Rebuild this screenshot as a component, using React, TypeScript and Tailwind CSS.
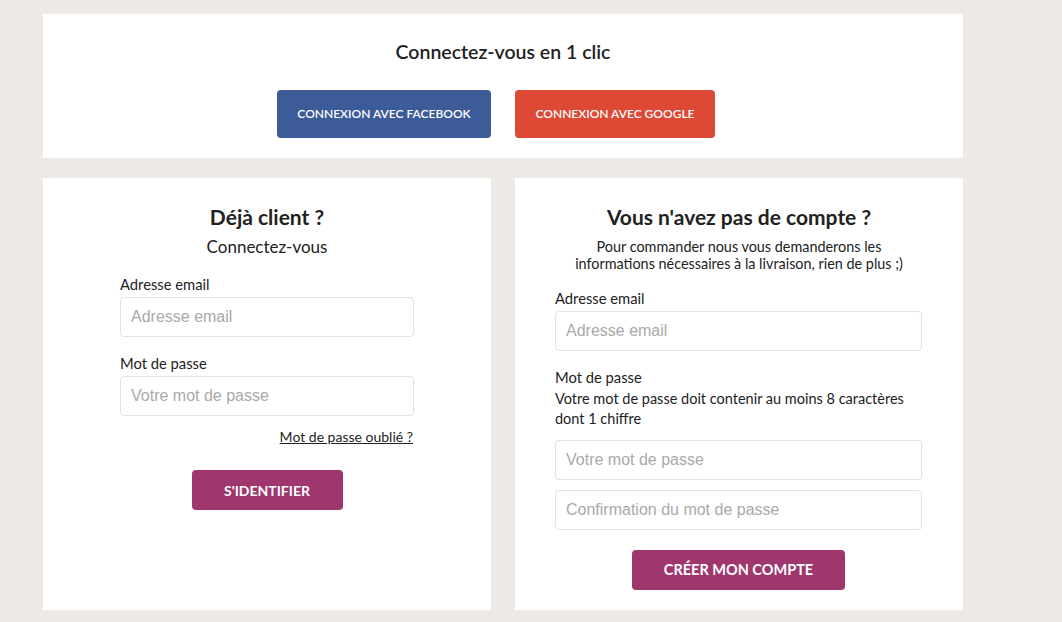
import React from 'react';

const font = { fontFamily: 'Lato, "Noto Sans", sans-serif' };

const Field = ({ placeholder, type = 'text' }: { placeholder: string; type?: string }) => (
  <input
    type={type}
    placeholder={placeholder}
    className="block w-full h-10 px-[10px] rounded border border-[#e7e1da] bg-white text-[16px] text-[#333] placeholder:text-[#a9a9a9] outline-none font-['Liberation_Sans',Arial,sans-serif]"
  />
);

const App: React.FC = () => {
  return (
    <div className="min-h-screen bg-[#edeae6] text-[#222] pt-[14px] pl-[43px]" style={font}>
      <div className="w-[920px]">
        {/* Social login */}
        <div className="bg-white pt-[26px] pb-[20px] flex flex-col items-center">
          <h2 className="text-[19.5px] leading-6 font-semibold">Connectez-vous en 1 clic</h2>
          <div className="mt-[26px] pr-[14px] flex gap-6">
            <button className="w-[214px] h-12 rounded bg-[#3d5a99] text-white text-[12px] font-semibold uppercase">
              Connexion avec Facebook
            </button>
            <button className="w-[200px] h-12 rounded bg-[#dd4935] text-white text-[12px] font-semibold uppercase">
              Connexion avec Google
            </button>
          </div>
        </div>

        <div className="mt-5 grid grid-cols-2 gap-6">
          {/* Existing customer */}
          <div className="bg-white h-[432px] pt-[25px] flex flex-col items-center">
            <h2 className="text-[21px] leading-7 font-bold">Déjà client ?</h2>
            <p className="mt-1 text-[17px] leading-6">Connectez-vous</p>
            <div className="w-[294px] mt-[15px] flex flex-col">
              <label className="text-[14.75px] leading-5">Adresse email</label>
              <div className="mt-[3px]">
                <Field placeholder="Adresse email" type="email" />
              </div>
              <label className="mt-4 text-[14.75px] leading-5">Mot de passe</label>
              <div className="mt-[3px]">
                <Field placeholder="Votre mot de passe" type="password" />
              </div>
              <a href="#" className="mt-3 mr-px self-end text-[14px] leading-[18px] underline">
                Mot de passe oublié ?
              </a>
              <button className="mt-6 self-center w-[151px] h-10 rounded bg-[#9f366e] text-white text-[14px] font-bold uppercase">
                S'identifier
              </button>
            </div>
          </div>

          {/* New customer */}
          <div className="bg-white h-[432px] pt-[25px] flex flex-col items-center">
            <h2 className="text-[21px] leading-7 font-bold">Vous n'avez pas de compte ?</h2>
            <p className="mt-[7px] text-[14.4px] leading-[17px] text-center">
              Pour commander nous vous demanderons les
              <br />
              informations nécessaires à la livraison, rien de plus ;)
            </p>
            <div className="w-[367px] mt-4 ml-10 self-start flex flex-col">
              <label className="text-[14.75px] leading-5">Adresse email</label>
              <div className="mt-[3px]">
                <Field placeholder="Adresse email" type="email" />
              </div>
              <label className="mt-4 text-[14.75px] leading-5">Mot de passe</label>
              <p className="mt-[2px] text-[14.5px] leading-5">
                Votre mot de passe doit contenir au moins 8 caractères
                <br />
                dont 1 chiffre
              </p>
              <div className="mt-[11px]">
                <Field placeholder="Votre mot de passe" type="password" />
              </div>
              <div className="mt-[10px]">
                <Field placeholder="Confirmation du mot de passe" type="password" />
              </div>
              <button className="mt-5 self-center w-[213px] h-10 rounded bg-[#9f366e] text-white text-[14.5px] font-bold uppercase">
                Créer mon compte
              </button>
            </div>
          </div>
        </div>
      </div>
    </div>
  );
};

export default App;
